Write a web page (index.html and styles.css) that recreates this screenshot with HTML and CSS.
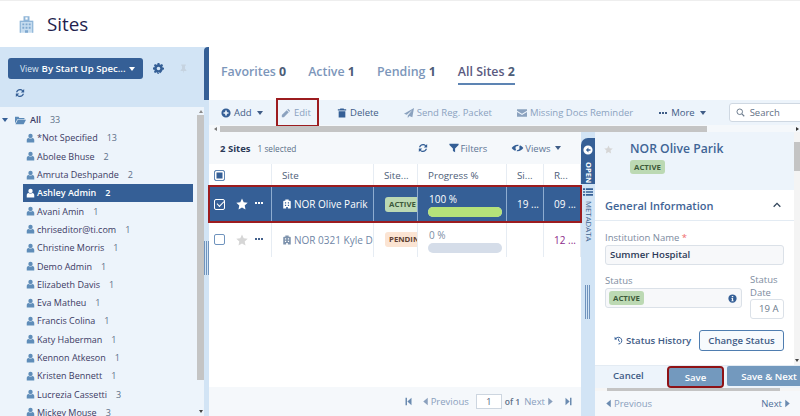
FILE: index.html
```html
<!DOCTYPE html>
<html>
<head>
  <title>Sites</title>
  <link rel="stylesheet" href="styles.css">
</head>
<body>

<svg class="defs" width="0" height="0">
  <symbol id="i-user" viewBox="0 0 12 12"><circle cx="6" cy="3.200" r="2.900"/><path d="M1 12V8.600C1 7 2.200 6 3.600 5.900 4.300 6.500 5.100 6.800 6 6.800s1.700-.3 2.400-.9C9.800 6 11 7 11 8.600V12z"/></symbol>
  <symbol id="i-refresh" viewBox="0 0 12 12"><path d="M6 1.200c1.400 0 2.600.6 3.500 1.500L11 1.300v4H7l1.600-1.600C8 3 7 2.700 6 2.700 4.500 2.700 3.200 3.700 2.800 5.100H1.200C1.600 2.900 3.600 1.200 6 1.200zM1 6.700h4L3.400 8.300C4 9 5 9.300 6 9.300c1.500 0 2.800-1 3.200-2.400h1.600c-.4 2.200-2.400 3.900-4.800 3.900-1.400 0-2.600-.6-3.500-1.500L1 10.700z"/></symbol>
  <symbol id="i-star" viewBox="0 0 12 12"><path d="M6 .5l1.700 3.700 4 .5-3 2.700.8 4L6 9.400l-3.500 2 .8-4-3-2.700 4-.5z"/></symbol>
  <symbol id="i-site" viewBox="0 0 12 12"><path d="M4 .5h4v1.500h1.500c.6 0 1 .4 1 1V11.500h-9V3c0-.6.4-1 1-1H4zM3.500 4v1.500h1.500V4zm3.500 0v1.500h1.500V4zM3.500 7v1.500h1.500V7zm3.500 0v1.500h1.500V7zM5 9.500v2h2v-2z" fill-rule="evenodd"/></symbol>
  <symbol id="i-first" viewBox="0 0 12 12"><path d="M2 1h2v10H2zM10 1v10L4.500 6z"/></symbol>
  <symbol id="i-last" viewBox="0 0 12 12"><path d="M8 1h2v10H8zM2 1v10l5.500-5z"/></symbol>
  <symbol id="i-prev" viewBox="0 0 12 12"><path d="M9 1v10L3 6z"/></symbol>
  <symbol id="i-next" viewBox="0 0 12 12"><path d="M3 1v10l6-5z"/></symbol>
</svg>

<div class="page-header">
  <svg class="header-icon" viewBox="0 0 20 24">
    <path fill="#c6dcef" d="M1 7h18v16H1z"/>
    <path fill="#8fb5d8" d="M6 1h8v6H6zM1 7h18v1.500H1zM1 7h1.500v16H1zM17.500 7H19v16h-1.500z"/>
    <path fill="#fff" d="M8.500 2.500h3v3h-3z"/>
    <path fill="#7fa8cf" d="M4.500 10.500h2.500V13H4.500zM8.800 10.500h2.500V13H8.800zM13 10.500h2.500V13H13zM4.500 15h2.500v2.500H4.500zM8.800 15h2.500v2.500H8.800zM13 15h2.500v2.500H13zM8 19.500h4V23H8z"/>
  </svg>
  <h1>Sites</h1>
</div>

<div class="workspace">
  <aside class="sidebar">
    <div class="sidebar-tools">
      <div class="tools-row">
        <button class="view-btn"><span class="view-label">View</span> By Start Up Spec...<i class="caret caret-white"></i></button>
        <svg class="gear" viewBox="0 0 12 12"><path fill-rule="evenodd" d="M5 0h2l.3 1.600 1 .4L9.700 1.100l1.300 1.300-.9 1.400.4 1 1.500.3v2l-1.500.3-.4 1-.9 1.400 0 0-1.300 1.300-1.400-.9-1 .4L7 12H5l-.3-1.500-1-.4-1.400.9L1 9.700l.9-1.400-.4-1L0 7V5l1.500-.3.4-1L1 2.400 2.300 1.100l1.400.9 1-.4zM6 4a2 2 0 100 4 2 2 0 000-4z"/></svg>
        <svg class="pin" viewBox="0 0 12 12"><path d="M3 0h6v1.200L8 2v3.500l1.800 2V8.500H6.600L6 12l-.6-3.500H2.200v-1l1.800-2V2L3 1.200z"/></svg>
      </div>
      <svg class="tool-refresh"><use href="#i-refresh"/></svg>
    </div>
    <div class="tree-wrap">
      <ul class="tree">
        <li class="tree-root">
          <i class="caret caret-blue"></i>
          <svg class="folder" viewBox="0 0 14 12"><path d="M0 2h4.500l1 1.300H12V5H3L0 10.500z"/><path d="M3.500 5.800H14L11 11.500H.6z"/></svg>
          <b>All</b><span class="count">33</span>
        </li>
        <li><svg class="user"><use href="#i-user"/></svg>*Not Specified<span class="count">13</span></li>
        <li><svg class="user"><use href="#i-user"/></svg>Abolee Bhuse<span class="count">2</span></li>
        <li><svg class="user"><use href="#i-user"/></svg>Amruta Deshpande<span class="count">2</span></li>
        <li class="selected"><svg class="user"><use href="#i-user"/></svg>Ashley Admin<span class="count">2</span></li>
        <li><svg class="user"><use href="#i-user"/></svg>Avani Amin<span class="count">1</span></li>
        <li><svg class="user"><use href="#i-user"/></svg>chriseditor@ti.com<span class="count">1</span></li>
        <li><svg class="user"><use href="#i-user"/></svg>Christine Morris<span class="count">1</span></li>
        <li><svg class="user"><use href="#i-user"/></svg>Demo Admin<span class="count">1</span></li>
        <li><svg class="user"><use href="#i-user"/></svg>Elizabeth Davis<span class="count">1</span></li>
        <li><svg class="user"><use href="#i-user"/></svg>Eva Matheu<span class="count">1</span></li>
        <li><svg class="user"><use href="#i-user"/></svg>Francis Colina<span class="count">1</span></li>
        <li><svg class="user"><use href="#i-user"/></svg>Katy Haberman<span class="count">1</span></li>
        <li><svg class="user"><use href="#i-user"/></svg>Kennon Atkeson<span class="count">1</span></li>
        <li><svg class="user"><use href="#i-user"/></svg>Kristen Bennett<span class="count">1</span></li>
        <li><svg class="user"><use href="#i-user"/></svg>Lucrezia Cassetti<span class="count">3</span></li>
        <li><svg class="user"><use href="#i-user"/></svg>Mickey Mouse<span class="count">3</span></li>
      </ul>
      <div class="vscroll">
        <i class="arrow-up"></i>
        <div class="vscroll-thumb"></div>
        <i class="arrow-down"></i>
      </div>
    </div>
  </aside>

  <div class="splitter">
    <div class="splitter-tab"></div>
    <div class="grip"></div>
  </div>

  <main class="main">
    <nav class="tabs">
      <a>Favorites <b>0</b></a>
      <a>Active <b>1</b></a>
      <a>Pending <b>1</b></a>
      <a class="active">All Sites <b>2</b></a>
    </nav>

    <div class="actions">
      <div class="actions-row">
        <span class="action dark add">
          <svg viewBox="0 0 12 12"><path fill-rule="evenodd" d="M6 .5a5.500 5.500 0 110 11 5.500 5.500 0 010-11zM5 3v2H3v2h2v2h2V7h2V5H7V3z"/></svg>Add<i class="caret caret-dark"></i>
        </span>
        <span class="action muted edit">
          <svg viewBox="0 0 12 12"><path d="M8.500 1l2.500 2.500-1 1L7.500 2zM6.800 2.700l2.500 2.500L3.500 11H1V8.500z"/></svg>Edit
        </span>
        <span class="action dark delete">
          <svg viewBox="0 0 12 12"><path d="M4 .5h4l.5 1H11V3H1V1.500h2.500zM2 4h8v7.500H2z"/></svg>Delete
        </span>
        <span class="action muted send">
          <svg viewBox="0 0 12 12"><path d="M12 0L10 11 6.500 9.500 4.500 12V9.200L10 2.500 3.300 8.200 0 7z"/></svg>Send Reg. Packet
        </span>
        <span class="action muted missing">
          <svg viewBox="0 0 12 12"><path d="M0 1.500h12v1.800L6 7 0 3.300zM0 4.800L6 8.500l6-3.700v5.700H0z"/></svg>Missing Docs Reminder
        </span>
        <span class="action dark more"><i class="dots"></i>More<i class="caret caret-dark"></i></span>
        <label class="search">
          <svg viewBox="0 0 12 12"><circle cx="5" cy="5" r="3.700" fill="none" stroke="#6b7a8c" stroke-width="1.300"/><path d="M7.800 7.800L11 11" stroke="#6b7a8c" stroke-width="1.500"/></svg>Search
        </label>
      </div>
      <div class="hscroll"><i class="hscroll-left"></i><div class="hscroll-thumb"></div><i class="hscroll-right"></i></div>
    </div>

    <div class="content">
      <section class="list">
        <div class="list-tools">
          <b>2 Sites</b><span class="selected-note">1 selected</span>
          <svg class="list-refresh"><use href="#i-refresh"/></svg>
          <span class="list-tool filters"><svg viewBox="0 0 12 12"><path d="M.5 1h11v1.500L7.300 6.500V11L4.700 9.500v-3L.5 2.500z"/></svg>Filters</span>
          <span class="list-tool views"><svg viewBox="0 0 14 12"><path d="M7 2c3 0 5.500 2 7 4-1.500 2-4 4-7 4S1.500 8 0 6c1.500-2 4-4 7-4zm0 1.500a2.500 2.500 0 100 5 2.500 2.500 0 000-5z" fill-rule="evenodd"/><path d="M10.500 0.500L4 11.500" stroke="#f5f8fb" stroke-width="1.500"/></svg>Views<i class="caret caret-dark"></i></span>
        </div>

        <div class="grid-row grid-head">
          <div class="cell"><i class="check-all"></i></div>
          <div class="cell">Site</div>
          <div class="cell">Site...</div>
          <div class="cell">Progress %</div>
          <div class="cell">Si...</div>
          <div class="cell">R...</div>
        </div>
        <div class="grid-row row-on">
          <div class="cell cell-select"><i class="check check-on"></i><svg class="star"><use href="#i-star"/></svg><i class="dots"></i></div>
          <div class="cell"><svg class="site-icon"><use href="#i-site"/></svg>NOR Olive Parik</div>
          <div class="cell clip"><span class="badge badge-active">ACTIVE</span></div>
          <div class="cell cell-progress"><span>100 %</span><div class="bar"><div class="bar-fill" style="width: 100%"></div></div></div>
          <div class="cell">19 ...</div>
          <div class="cell">09 ...</div>
        </div>
        <div class="grid-row row-off">
          <div class="cell cell-select"><i class="check"></i><svg class="star"><use href="#i-star"/></svg><i class="dots"></i></div>
          <div class="cell clip"><svg class="site-icon"><use href="#i-site"/></svg><span class="site-link">NOR 0321 Kyle Doe</span></div>
          <div class="cell clip"><span class="badge badge-pending">PENDING</span></div>
          <div class="cell cell-progress"><span>0 %</span><div class="bar"><div class="bar-fill" style="width: 0%"></div></div></div>
          <div class="cell"></div>
          <div class="cell">12 ...</div>
        </div>

        <div class="pager">
          <svg class="pg-end"><use href="#i-first"/></svg>
          <span class="pg-link"><svg><use href="#i-prev"/></svg>Previous</span>
          <span class="pg-input">1</span>
          <span class="pg-of">of 1</span>
          <span class="pg-link pg-next">Next<svg><use href="#i-next"/></svg></span>
          <svg class="pg-end pg-last"><use href="#i-last"/></svg>
        </div>
      </section>

      <div class="meta-strip">
        <div class="open-tab">
          <svg viewBox="0 0 12 12"><path fill="#fff" fill-rule="evenodd" d="M6 .5a5.500 5.500 0 110 11 5.500 5.500 0 010-11zM6.500 3L3.500 6l3 3V7H9V5H6.500z"/></svg>
          <span>OPEN</span>
        </div>
        <svg class="meta-list" viewBox="0 0 12 12"><path fill="#355f96" d="M0 1.500h2.500v2H0zM3.500 1.500H12v2H3.500zM0 5h2.500v2H0zM3.500 5H12v2H3.500zM0 8.500h2.500v2H0zM3.500 8.500H12v2H3.500z"/></svg>
        <span class="meta-text">METADATA</span>
        <div class="grip"></div>
      </div>

      <section class="detail">
        <div class="detail-body">
          <div class="detail-scroll">
            <div class="detail-head">
              <svg class="star"><use href="#i-star"/></svg>
              <div>
                <h2>NOR Olive Parik</h2>
                <span class="badge badge-active">ACTIVE</span>
              </div>
            </div>
            <div class="section-title">General Information<svg viewBox="0 0 12 12"><path d="M2 8l4-4 4 4" fill="none" stroke="#33465c" stroke-width="1.600"/></svg></div>
            <div class="form">
              <div class="field-label">Institution Name <em>*</em></div>
              <div class="input input-name">Summer Hospital</div>
              <div class="status-row">
                <div class="status-main">
                  <div class="field-label">Status</div>
                  <div class="input input-status">
                    <span class="badge badge-active">ACTIVE</span>
                    <svg viewBox="0 0 12 12"><path fill="#355f96" fill-rule="evenodd" d="M6 .5a5.500 5.500 0 110 11 5.500 5.500 0 010-11zM5 2.500v1.700h2V2.500zM4.500 5.200v1h.7v2.500h-.7v1h3v-1h-.7V5.200z"/></svg>
                  </div>
                </div>
                <div class="status-date">
                  <div class="field-label">Status Date</div>
                  <div class="input input-date">19 A</div>
                </div>
              </div>
              <div class="status-actions">
                <span class="history"><svg viewBox="0 0 12 12"><path d="M2.300 3.500A4.500 4.500 0 116 10.700" fill="none" stroke="#355f96" stroke-width="1.300"/><path fill="#355f96" d="M.8 1l3.600 3.200L.8 5z"/><path d="M6 3.500V6.300L8 7.300" fill="none" stroke="#355f96" stroke-width="1.200"/></svg>Status History</span>
                <button class="change-btn">Change Status</button>
              </div>
            </div>
          </div>
          <div class="detail-vscroll"><div class="detail-thumb"></div><i class="arrow-down"></i></div>
        </div>
        <div class="detail-actions">
          <span class="cancel">Cancel</span>
          <button class="save-btn save-main">Save</button>
          <button class="save-btn save-next">Save &amp; Next</button>
        </div>
        <div class="detail-hscroll"><div class="detail-hthumb"></div></div>
        <div class="detail-nav">
          <span class="prev"><svg><use href="#i-prev"/></svg>Previous</span>
          <span class="next">Next<svg><use href="#i-next"/></svg></span>
        </div>
      </section>
    </div>
  </main>
</div>

</body>
</html>
```

FILE: styles.css
```css
* {
  box-sizing: border-box;
}

html, body {
  margin: 0;
  height: 416px;
  overflow: hidden;
}

body {
  font-family: "Open Sans", sans-serif;
  font-size: 9.6px;
  color: #2c3a58;
  background: #fff;
}

.defs {
  position: absolute;
}

button {
  font-family: inherit;
}

svg {
  fill: currentColor;
  display: block;
}

/* header */
.page-header {
  height: 47px;
  display: flex;
  align-items: center;
  padding-left: 19px;
  border-top: 1px solid #eee;
}

.header-icon {
  width: 15px;
  height: 19px;
}

.page-header h1 {
  margin: 0 0 0 13px;
  font-size: 18.8px;
  font-weight: 400;
  color: #231f4e;
}

.workspace {
  display: flex;
  height: 369px;
}

/* sidebar */
.sidebar {
  width: 204px;
  flex: none;
  display: flex;
  flex-direction: column;
}

.sidebar-tools {
  height: 60px;
  background: #d2e4f5;
  padding: 11px 0 0 8px;
}

.tools-row {
  display: flex;
  align-items: center;
}

.view-btn {
  width: 135px;
  height: 21px;
  background: #355f96;
  color: #fff;
  border: 0;
  border-radius: 3px;
  padding: 0 0 0 12px;
  font-size: 9.6px;
  font-weight: 600;
  text-align: left;
  white-space: nowrap;
  display: flex;
  align-items: center;
  gap: 3px;
}

.view-label {
  font-size: 8.5px;
  font-weight: 400;
  color: #dfe9f4;
}

.gear {
  width: 11px;
  height: 11px;
  margin-left: 10px;
  color: #355f96;
}

.pin {
  width: 9px;
  height: 10px;
  margin-left: 15px;
  color: #c6d3e0;
}

.tool-refresh {
  width: 10px;
  height: 10px;
  margin: 9px 0 0 7px;
  color: #355f96;
}

.tree-wrap {
  flex: 1;
  display: flex;
  background: #edf4fb;
  overflow: hidden;
}

.tree {
  list-style: none;
  margin: 0;
  padding: 3.5px 4px 0 0;
  flex: 1;
  font-size: 9px;
}

.tree li {
  height: 18.3px;
  margin-left: 23px;
  padding-left: 3px;
  display: flex;
  align-items: center;
  white-space: nowrap;
  color: #3b3a63;
}

.tree .tree-root {
  margin-left: 2px;
  padding-left: 0;
}

.tree-root b {
  font-weight: 600;
  margin-left: 4px;
}

.folder {
  width: 11px;
  height: 10px;
  margin-left: 7px;
  color: #5b8ab8;
}

.user {
  width: 9px;
  height: 10px;
  margin-right: 2px;
  color: #5f8db9;
}

.count {
  margin-left: 9px;
  font-size: 9px;
  color: #5d7088;
}

.tree .selected {
  background: #355f96;
  color: #fff;
  font-weight: 600;
}

.selected .user,
.selected .count {
  color: #fff;
}

.vscroll {
  width: 7px;
  flex: none;
  display: flex;
  flex-direction: column;
  align-items: center;
  padding-top: 3px;
}

.vscroll-thumb {
  width: 100%;
  height: 265px;
  margin-top: 2px;
  background: #c4c4c4;
}

.arrow-up {
  border: 2px solid transparent;
  border-top: 0;
  border-bottom: 3px solid #8a8a8a;
}

.arrow-down {
  margin-top: auto;
  margin-bottom: 3px;
  border: 2px solid transparent;
  border-bottom: 0;
  border-top: 3px solid #444;
}

.splitter {
  width: 5px;
  flex: none;
  background: #d2e4f5;
}

.splitter-tab {
  height: 53px;
  background: #355f96;
  border-radius: 4px 0 0 0;
}

.grip {
  height: 34px;
  width: 5px;
  background: repeating-linear-gradient(90deg, #6f93bd 0, #6f93bd 1px, #d2e4f5 1px, #d2e4f5 2px);
}

.splitter .grip {
  margin-top: 141px;
}

/* main */
.main {
  flex: 1;
  min-width: 0;
  display: flex;
  flex-direction: column;
}

.tabs {
  height: 53px;
  display: flex;
  gap: 22px;
  padding: 16px 0 0 12px;
  font-size: 12.4px;
  font-weight: 600;
  color: #7c96ba;
}

.tabs a {
  height: 20px;
  white-space: nowrap;
}

.tabs b {
  color: #4c5d78;
  font-weight: 700;
}

.tabs .active {
  color: #5b5a80;
  height: 22px;
  border-bottom: 2px solid #5d84b3;
}

.actions {
  height: 32px;
  flex: none;
  background: #edf4fb;
}

.actions-row {
  height: 25px;
  display: flex;
  align-items: center;
  padding-left: 12px;
  white-space: nowrap;
  font-size: 9.5px;
}

.action {
  display: flex;
  align-items: center;
  flex: none;
  gap: 3px;
}

.action svg {
  width: 10px;
  height: 10px;
  flex: none;
}

.action.dark {
  color: #3f5c86;
}

.action.dark svg {
  color: #355f96;
}

.action.muted {
  color: #8ba2bf;
}

.add {
  width: 39px;
}

.edit {
  width: 43px;
  height: 29px;
  padding-left: 5px;
  margin-left: 16px;
  outline: 2px solid #9c1c1f;
  outline-offset: -2px;
}

.delete {
  margin-left: 18px;
}

.send {
  margin-left: 25px;
}

.missing {
  margin-left: 25px;
}

.more {
  margin-left: 26px;
}

.search {
  width: 80px;
  height: 19px;
  margin-left: 23px;
  flex: none;
  background: #fff;
  border: 1px solid #cfd8e2;
  border-radius: 3px;
  display: flex;
  align-items: center;
  gap: 5px;
  padding-left: 6px;
  color: #5f6f84;
}

.search svg {
  width: 9px;
  height: 9px;
}

.hscroll {
  height: 7px;
  display: flex;
  align-items: center;
  background: #f5f8fb;
}

.hscroll-left {
  margin: 0 3px 0 5px;
  border: 2px solid transparent;
  border-left: 0;
  border-right: 3px solid #777;
}

.hscroll-thumb {
  width: 487px;
  height: 6px;
  background: #c4c4c4;
}

.hscroll-right {
  margin-left: auto;
  margin-right: 1px;
  border: 2px solid transparent;
  border-right: 0;
  border-left: 3px solid #333;
}

.content {
  flex: 1;
  min-height: 0;
  display: flex;
}

/* list */
.list {
  width: 372px;
  flex: none;
  display: flex;
  flex-direction: column;
  background: #fff;
}

.list-tools {
  height: 32px;
  flex: none;
  display: flex;
  align-items: center;
  padding-left: 11px;
  background: #f5f8fb;
  white-space: nowrap;
  font-size: 9.5px;
}

.list-tools b {
  font-weight: 700;
  font-size: 9.5px;
}

.selected-note {
  margin-left: 7px;
  font-size: 8.3px;
  color: #5b6f88;
}

.list-refresh {
  width: 10px;
  height: 10px;
  margin-left: 122px;
  color: #355f96;
}

.list-tool {
  display: flex;
  align-items: center;
  gap: 1px;
  color: #5f7696;
}

.list-tool svg {
  width: 10px;
  height: 10px;
  color: #355f96;
}

.filters {
  margin-left: 21px;
}

.views {
  margin-left: 24px;
}

.views svg {
  width: 13px;
}

.views .caret {
  margin-left: 3px;
}

.grid-row {
  display: grid;
  grid-template-columns: 63px 102px 44px 89px 37px 37px;
  flex: none;
  font-size: 10px;
}

.cell {
  display: flex;
  align-items: center;
  min-width: 0;
  padding-left: 10px;
  border-right: 1px solid #e6ecf3;
  white-space: nowrap;
}

.clip {
  overflow: hidden;
}

.grid-head {
  height: 22px;
  color: #4d5d78;
  font-size: 9.8px;
}

.grid-head .cell:first-child {
  padding-left: 5px;
}

.check-all {
  width: 11px;
  height: 11px;
  border: 1px solid #6288b5;
  border-radius: 2px;
  background: #355f96;
  box-shadow: inset 0 0 0 1.5px #fff;
}

.row-on {
  height: 36px;
  background: #355f96;
  color: #fff;
  outline: 2px solid #9c1c1f;
  outline-offset: -1px;
  position: relative;
}

.row-on .cell {
  border-right-color: #8eacd0;
}

.row-off {
  height: 35px;
  color: #7d8da3;
}

.row-off .cell:last-child {
  color: #8c2a8a;
}

.cell-select {
  padding-left: 5px;
}

.check {
  width: 11px;
  height: 11px;
  flex: none;
  border: 1px solid #6f93bd;
  border-radius: 2px;
  background: #fff;
  position: relative;
}

.check.check-on {
  border-color: #fff;
  background: #355f96;
}

.check-on::after {
  content: "";
  position: absolute;
  left: 1.5px;
  top: 1px;
  width: 6px;
  height: 3px;
  border-left: 1.5px solid #fff;
  border-bottom: 1.5px solid #fff;
  transform: rotate(-45deg);
}

.star {
  width: 12px;
  height: 12px;
  flex: none;
  color: #fff;
}

.cell-select .star {
  margin: 0 7px 0 11px;
}

.row-off .star {
  color: #d6d6d6;
}

.dots {
  width: 8px;
  height: 2px;
  flex: none;
  background: repeating-linear-gradient(90deg, currentColor 0, currentColor 2px, transparent 2px, transparent 3px);
  margin-bottom: 2px;
}

.more .dots {
  margin: 0 1px 0 0;
}

.row-off .dots {
  color: #44618c;
}

.site-icon {
  width: 10px;
  height: 12px;
  flex: none;
  margin: 0 2px 0 0;
}

.row-off .site-icon {
  color: #7e93ad;
}

.row-off .site-link {
  color: #6f86a6;
}

.badge {
  display: inline-block;
  padding: 0 4px;
  height: 14px;
  line-height: 14px;
  border-radius: 3px;
  font-size: 7.8px;
  font-weight: 700;
}

.badge-active {
  background: #bcd9b3;
  color: #3d5a3a;
}

.badge-pending {
  background: #fbe4d3;
  color: #5e4032;
}

.clip .badge {
  flex: none;
  height: 15px;
  line-height: 15px;
  margin-left: 1px;
}

.cell-progress {
  flex-direction: column;
  align-items: flex-start;
  padding: 7px 0 0 11px;
  line-height: 13px;
}

.bar {
  width: 74px;
  height: 10px;
  margin: 1px 0 0 -1px;
  border-radius: 6px;
  background: #d5dde9;
}

.bar-fill {
  height: 100%;
  border-radius: 6px;
  background: #b5e27a;
}

.pager {
  height: 29px;
  margin-top: auto;
  display: flex;
  align-items: center;
  justify-content: flex-end;
  padding-right: 8px;
  background: #f5f8fb;
  color: #8aa0bd;
  font-size: 9.5px;
}

.pager svg {
  width: 9px;
  height: 9px;
}

.pg-end {
  color: #6b8bb0;
  margin-right: 8px;
}

.pager .pg-last {
  margin: 0 0 0 9px;
}

.pg-link {
  display: flex;
  align-items: center;
  color: #8aa0bd;
}

.pg-link svg {
  margin-right: 1px;
}

.pg-next svg {
  margin: 0 0 0 1px;
}

.pg-input {
  width: 26px;
  height: 15px;
  margin: 0 3px 0 7px;
  background: #fff;
  border: 1px solid #cdd6e0;
  text-align: center;
  line-height: 13px;
  font-size: 9px;
  color: #4d5d78;
}

.pg-of {
  margin-right: 4px;
  font-size: 8.5px;
  font-weight: 600;
  color: #5d7088;
}

/* metadata strip */
.meta-strip {
  width: 14px;
  flex: none;
  background: #d2e4f5;
  display: flex;
  flex-direction: column;
  align-items: center;
  padding-top: 6px;
}

.open-tab {
  width: 14px;
  height: 46px;
  flex: none;
  background: #355f96;
  border-radius: 7px 0 0 0;
  display: flex;
  flex-direction: column;
  align-items: center;
  padding-top: 7px;
  color: #fff;
}

.open-tab svg {
  width: 10px;
  height: 10px;
}

.open-tab span {
  margin-top: 7px;
  writing-mode: vertical-rl;
  font-size: 7.5px;
  font-weight: 700;
  line-height: 9px;
}

.meta-list {
  width: 10px;
  height: 10px;
  margin-top: 3px;
  flex: none;
}

.meta-text {
  margin-top: 4px;
  writing-mode: vertical-rl;
  font-size: 7.8px;
  line-height: 9px;
  color: #41638f;
}

.meta-strip .grip {
  width: 6px;
  height: 34px;
  margin-top: 44px;
  flex: none;
}

/* detail */
.detail {
  flex: 1;
  min-width: 0;
  display: flex;
  flex-direction: column;
  overflow: hidden;
  background: #fff;
}

.detail-body {
  flex: none;
  height: 233px;
  display: flex;
}

.detail-scroll {
  width: 199px;
  flex: none;
  overflow: hidden;
}

.detail-head {
  height: 58px;
  display: flex;
  padding: 8px 0 0 9px;
  background: #edf4fb;
}

.detail-head .star {
  color: #d6d6d6;
  margin: 5px 17px 0 0;
  width: 9px;
  height: 9px;
}

.detail-head h2 {
  margin: 0 0 2px;
  font-size: 12.2px;
  line-height: 18px;
  font-weight: 600;
  color: #3f6496;
  white-space: nowrap;
}

.detail-head .badge {
  display: block;
  width: 35px;
  height: 14px;
}

.section-title {
  height: 31px;
  display: flex;
  align-items: center;
  justify-content: space-between;
  padding: 0 12px 0 10px;
  border-bottom: 1px solid #e3ebf3;
  font-size: 11px;
  font-weight: 600;
  color: #3f6496;
}

.section-title svg {
  width: 10px;
  height: 10px;
}

.form {
  padding: 10px 10px 0 10px;
}

.field-label {
  font-size: 9.5px;
  line-height: 13px;
  color: #7d8ba0;
}

.field-label em {
  color: #ef6a6a;
  font-style: normal;
}

.input {
  margin-top: 1px;
  background: #f7f8fa;
  border: 1px solid #dbe1e8;
  border-radius: 3px;
}

.input-name {
  height: 20px;
  padding-left: 4px;
  line-height: 18px;
  font-weight: 600;
  color: #2c3a58;
}

.status-row {
  display: flex;
  gap: 8px;
  margin-top: 9px;
}

.status-main {
  width: 137px;
  flex: none;
}

.input-status {
  height: 20px;
  display: flex;
  align-items: center;
  justify-content: space-between;
  padding: 0 4px 0 3px;
}

.input-status svg {
  width: 9px;
  height: 9px;
}

.status-date {
  flex: 1;
  min-width: 0;
}

.status-date .field-label {
  line-height: 12.5px;
}

.input-date {
  height: 20px;
  margin-top: 0;
  padding-left: 8px;
  line-height: 18px;
  background: #fff;
  color: #6b7a8c;
  overflow: hidden;
  white-space: nowrap;
}

.status-actions {
  display: flex;
  align-items: center;
  margin: 11px 0 0 9px;
}

.history {
  width: 77px;
  flex: none;
  display: flex;
  align-items: center;
  gap: 3px;
  color: #3f5c86;
  font-weight: 600;
  white-space: nowrap;
}

.history svg {
  width: 9px;
  height: 9px;
  flex: none;
}

.change-btn {
  width: 85px;
  height: 21px;
  margin-left: 8px;
  padding: 0;
  flex: none;
  background: #f7fafd;
  border: 1px solid #4f7db0;
  border-radius: 3px;
  font-size: 9.6px;
  font-weight: 600;
  color: #3f5c86;
}

.detail-vscroll {
  width: 6px;
  flex: none;
  display: flex;
  flex-direction: column;
  align-items: center;
  background: #f4f4f4;
}

.detail-thumb {
  width: 100%;
  height: 29px;
  margin-top: 10px;
  background: #c4c4c4;
}

.detail-actions {
  height: 23px;
  flex: none;
  display: flex;
  align-items: flex-start;
  background: #edf4fb;
  white-space: nowrap;
  border-top: 1px solid #e3ebf3;
}

.cancel {
  width: 74px;
  flex: none;
  padding-left: 18px;
  line-height: 20px;
  font-weight: 600;
  color: #3f5c86;
}

.save-btn {
  flex: none;
  padding: 0;
  border: 0;
  border-radius: 2px;
  background: #7399be;
  color: #fff;
  font-size: 9.6px;
  font-weight: 600;
}

.save-main {
  width: 53px;
  height: 18px;
  margin-top: 2px;
  outline: 2px solid #8e1216;
}

.save-next {
  width: 84px;
  height: 20px;
  margin-left: 5px;
}

.detail-hscroll {
  height: 3px;
  flex: none;
  background: #f5f5f5;
}

.detail-hthumb {
  width: 173px;
  height: 3px;
  margin-left: 12px;
  background: #c4c4c4;
}

.detail-nav {
  flex: 1;
  display: flex;
  align-items: center;
  justify-content: space-between;
  padding: 0 8px 0 9px;
  background: #f5f8fb;
  color: #8aa0bd;
  font-size: 9.5px;
}

.detail-nav span {
  display: flex;
  align-items: center;
  gap: 1px;
}

.detail-nav svg {
  width: 9px;
  height: 9px;
  color: #6b8bb0;
}

.detail-nav .next {
  color: #4f6f9a;
}

.caret {
  display: inline-block;
  width: 0;
  height: 0;
  flex: none;
  border-left: 3.5px solid transparent;
  border-right: 3.5px solid transparent;
  border-top: 4px solid currentColor;
}

.caret-white {
  color: #fff;
}

.caret-blue {
  color: #355f96;
}

.caret-dark {
  color: #3f5c86;
  margin-left: 2px;
}
```
